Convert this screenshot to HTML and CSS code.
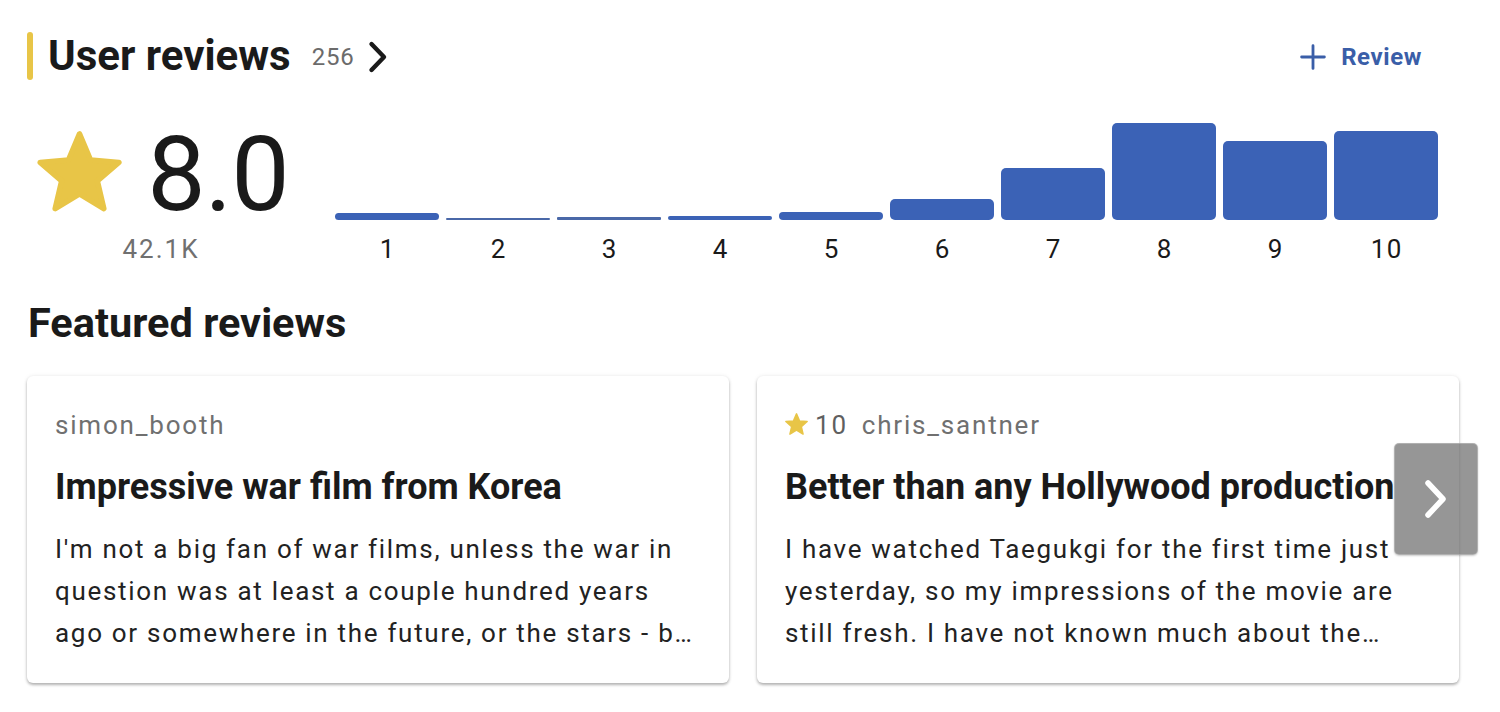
FILE: index.html
```html
<!DOCTYPE html>
<html lang="en">
<head>
<meta charset="utf-8">
<title>User reviews</title>
<link rel="stylesheet" href="styles.css">
</head>
<body>
<main class="page">
  <header class="section-head">
    <div class="head-left">
      <span class="accent"></span>
      <h2 class="head-title">User reviews</h2>
      <span class="head-count">256</span>
      <svg class="head-chevron" viewBox="0 0 22 34" width="22" height="34"><path d="M4.5 4l12.5 13-12.5 13" fill="none" stroke="#1a1a1a" stroke-width="4.4" stroke-linecap="round" stroke-linejoin="round"/></svg>
    </div>
    <a class="review-btn" href="#">
      <svg viewBox="0 0 24 24" width="26" height="26"><path d="M12 1.5v21M1.5 12h21" stroke="#3a5ea8" stroke-width="2.6" stroke-linecap="round"/></svg>
      <span>Review</span>
    </a>
  </header>

  <section class="rating-row">
    <div class="score">
      <div class="score-main">
        <svg class="big-star" viewBox="1.2 1.3 21.6 20.5" width="85" height="81"><path d="M12 17.27L18.18 21l-1.64-7.03L22 9.24l-7.19-.61L12 2 9.19 8.63 2 9.24l5.46 4.73L5.82 21z" fill="#e8c547" stroke="#e8c547" stroke-width="1.4" stroke-linejoin="round"/></svg>
        <span class="score-num">8.0</span>
      </div>
      <div class="score-count">42.1K</div>
    </div>
    <div class="chart">
      <div class="col"><div class="bar-area"><div class="bar" style="height:7px"></div></div><div class="lbl">1</div></div>
      <div class="col"><div class="bar-area"><div class="bar thin" style="height:2px"></div></div><div class="lbl">2</div></div>
      <div class="col"><div class="bar-area"><div class="bar thin" style="height:3px"></div></div><div class="lbl">3</div></div>
      <div class="col"><div class="bar-area"><div class="bar" style="height:4px"></div></div><div class="lbl">4</div></div>
      <div class="col"><div class="bar-area"><div class="bar" style="height:8px"></div></div><div class="lbl">5</div></div>
      <div class="col"><div class="bar-area"><div class="bar" style="height:21px"></div></div><div class="lbl">6</div></div>
      <div class="col"><div class="bar-area"><div class="bar" style="height:52px"></div></div><div class="lbl">7</div></div>
      <div class="col"><div class="bar-area"><div class="bar" style="height:97px"></div></div><div class="lbl">8</div></div>
      <div class="col"><div class="bar-area"><div class="bar" style="height:79px"></div></div><div class="lbl">9</div></div>
      <div class="col"><div class="bar-area"><div class="bar" style="height:89px"></div></div><div class="lbl">10</div></div>
    </div>
  </section>

  <h2 class="featured-title">Featured reviews</h2>

  <section class="cards">
    <article class="card">
      <div class="card-meta"><span class="author">simon_booth</span></div>
      <h3 class="card-title">Impressive war film from Korea</h3>
      <p class="card-body">I'm not a big fan of war films, unless the war in question was at least a couple hundred years ago or somewhere in the future, or the stars - but this one really surprised me and I was impressed by it.</p>
    </article>
    <article class="card">
      <div class="card-meta">
        <svg class="small-star" viewBox="1.2 1.3 21.6 20.5" width="23" height="22"><path d="M12 17.27L18.18 21l-1.64-7.03L22 9.24l-7.19-.61L12 2 9.19 8.63 2 9.24l5.46 4.73L5.82 21z" fill="#e8c547" stroke="#e8c547" stroke-width="1.4" stroke-linejoin="round"/></svg>
        <span class="rating">10</span>
        <span class="author">chris_santner</span>
      </div>
      <h3 class="card-title">Better than any Hollywood production</h3>
      <p class="card-body">I have watched Taegukgi for the first time just yesterday, so my impressions of the movie are still fresh. I have not known much about the Korean war before watching it.</p>
    </article>
    <button class="next-btn" type="button" aria-label="Next">
      <svg viewBox="0 0 26 42" width="26" height="42"><path d="M5 5l15 16-15 16" fill="none" stroke="#ffffff" stroke-width="5.5" stroke-linecap="round" stroke-linejoin="round"/></svg>
    </button>
  </section>
</main>
</body>
</html>
```

FILE: styles.css
```css
* { box-sizing: border-box; }

html, body {
  margin: 0;
  padding: 0;
  background: #ffffff;
}

body {
  font-family: Roboto, "Liberation Sans", Arial, sans-serif;
  color: #1a1a1a;
  width: 1500px;
  height: 712px;
  overflow: hidden;
}

.page {
  padding: 32px 41px 0 27px;
}

/* header */
.section-head {
  display: flex;
  align-items: center;
  justify-content: space-between;
  height: 48px;
}

.head-left {
  display: flex;
  align-items: center;
  height: 48px;
}

.accent {
  width: 6px;
  height: 48px;
  border-radius: 3px;
  background: #e8c547;
  margin-right: 15px;
}

.head-title {
  margin: 0;
  font-size: 42px;
  line-height: 48px;
  font-weight: 700;
  color: #1a1a1a;
}

.head-count {
  margin-left: 21px;
  font-size: 24px;
  color: #6b6b6b;
  padding-top: 2px;
  letter-spacing: 0.8px;
}

.head-chevron {
  margin-left: 12px;
  margin-top: 2px;
}

.review-btn {
  display: flex;
  align-items: center;
  gap: 15px;
  color: #3a5ea8;
  text-decoration: none;
  font-size: 24px;
  font-weight: 700;
  letter-spacing: 0.6px;
  margin-right: 37px;
  padding-top: 2px;
}

/* rating row */
.rating-row {
  display: flex;
  align-items: flex-start;
  margin-top: 43px;
}

.score {
  display: flex;
  flex-direction: column;
  align-items: center;
  margin-left: 7px;
  width: 258px;
}

.score-main {
  display: flex;
  align-items: flex-end;
  height: 104px;
}

.big-star {
  margin-bottom: 15px;
}

.score-num {
  font-size: 104px;
  line-height: 104px;
  font-weight: 400;
  color: #1a1a1a;
  margin-left: 25px;
  letter-spacing: -1px;
}

.score-count {
  margin-top: 7px;
  font-size: 26px;
  line-height: 30px;
  letter-spacing: 2px;
  color: #707070;
  margin-left: -4px;
}

.chart {
  flex: 1;
  display: flex;
  gap: 7px;
  margin-left: 43px;
  margin-right: 21px;
}

.col {
  flex: 1;
  display: flex;
  flex-direction: column;
}

.bar-area {
  height: 97px;
  display: flex;
  align-items: flex-end;
}

.bar {
  width: 100%;
  background: #3b62b6;
  border-radius: 5px;
}

.bar.thin {
  border-radius: 1px;
  background: #4a68a8;
}

.lbl {
  margin-top: 14px;
  text-align: center;
  font-size: 26px;
  line-height: 30px;
  letter-spacing: 1.5px;
  padding-left: 1.5px;
  color: #1a1a1a;
}

/* featured */
.featured-title {
  margin: 35px 0 0 1px;
  font-size: 41.5px;
  line-height: 48px;
  font-weight: 700;
  color: #1a1a1a;
}

.cards {
  position: relative;
  display: flex;
  gap: 28px;
  margin-top: 29px;
}

.card {
  flex: 1;
  min-width: 0;
  background: #ffffff;
  border-radius: 6px;
  box-shadow: 0 2px 3px rgba(0, 0, 0, 0.28), 0 0 4px rgba(0, 0, 0, 0.08);
  padding: 33px 28px 28px 28px;
  height: 307px;
}

.card-meta {
  display: flex;
  align-items: center;
  height: 32px;
  font-size: 26px;
  letter-spacing: 1.8px;
  color: #707070;
}

.small-star {
  margin-right: 7px;
  margin-top: -2px;
}

.rating {
  margin-right: 14px;
  color: #5f5f5f;
}

.card-title {
  margin: 24px 0 0 0;
  font-size: 36px;
  line-height: 44px;
  font-weight: 700;
  color: #1a1a1a;
  white-space: nowrap;
  overflow: visible;
}

.card-body {
  margin: 19px 0 0 0;
  font-size: 26px;
  line-height: 42px;
  color: #222222;
  display: -webkit-box;
  -webkit-line-clamp: 3;
  -webkit-box-orient: vertical;
  overflow: hidden;
  letter-spacing: 1.7px;
}

.next-btn {
  position: absolute;
  right: -19px;
  top: 67px;
  width: 84px;
  height: 112px;
  border: 1px solid rgba(255, 255, 255, 0.25);
  border-radius: 5px;
  background: rgba(110, 110, 110, 0.72);
  display: flex;
  align-items: center;
  justify-content: center;
  padding: 0;
  box-shadow: 0 1px 2px rgba(0, 0, 0, 0.2);
}
```
